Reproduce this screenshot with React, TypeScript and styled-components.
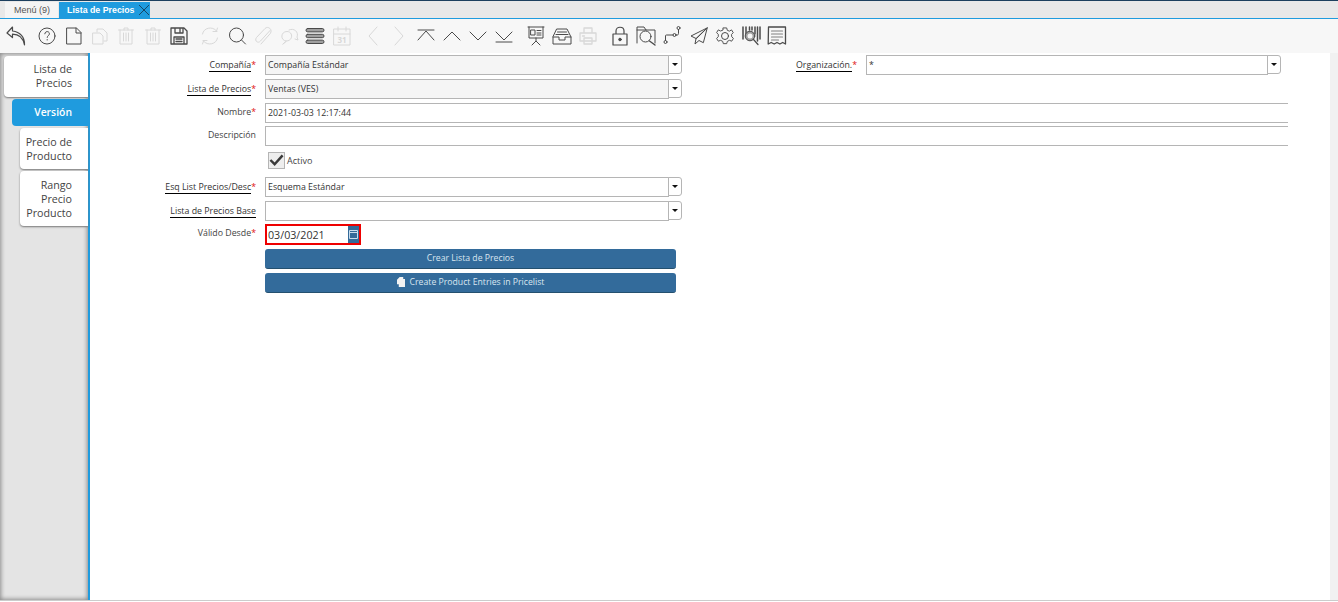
import React from "react";
import styled, { createGlobalStyle } from "styled-components";

const GlobalStyle = createGlobalStyle`
  html, body {
    margin: 0;
    padding: 0;
    height: 100%;
    background: #ffffff;
    overflow: hidden;
  }
  #root {
    height: 100%;
  }
`;

const FONT = `"Open Sans", "Liberation Sans", sans-serif`;

const Page = styled.div`
  display: flex;
  flex-direction: column;
  height: 601px;
  font-family: ${FONT};
  border-top: 1px solid #1c3f5e;
  box-sizing: border-box;
`;

const TabBar = styled.div`
  display: flex;
  align-items: flex-end;
  height: 17px;
  padding-left: 5px;
  background: #e8e8e8;
  border-bottom: 1px solid #1f9bde;
`;

const WindowTab = styled.div<{ $active?: boolean }>`
  display: flex;
  align-items: center;
  height: 16px;
  margin-right: 1px;
  padding: ${(p) => (p.$active ? "0 0 0 8px" : "0 8px 0 9px")};
  font-family: "Liberation Sans", sans-serif;
  font-size: ${(p) => (p.$active ? "8.8px" : "9px")};
  font-weight: ${(p) => (p.$active ? 700 : 400)};
  color: ${(p) => (p.$active ? "#ffffff" : "#555555")};
  background: ${(p) => (p.$active ? "#1f9bde" : "#f4f4f4")};
`;

const CloseIcon = styled.svg`
  width: 12px;
  height: 12px;
  margin-left: 3px;
  stroke: #174766;
  stroke-width: 1;
  fill: none;
`;

const Toolbar = styled.div`
  display: flex;
  align-items: center;
  height: 34px;
  padding-left: 3px;
  background: #f7f7f7;
`;

const Tool = styled.div<{ $off?: boolean; $gap?: boolean }>`
  display: flex;
  align-items: center;
  justify-content: center;
  width: 26.3px;
  height: 26px;
  margin-left: ${(p) => (p.$gap ? "5px" : "0")};
  color: ${(p) => (p.$off ? "#d8d8d8" : "#4a4a4a")};

  svg {
    flex: none;
    width: 24px;
    height: 24px;
    fill: none;
    stroke: currentColor;
    stroke-width: 1;
    stroke-linecap: round;
    stroke-linejoin: round;
  }
`;

const Body = styled.div`
  flex: 1;
  display: flex;
  min-height: 0;
  border-bottom: 1px solid #cccccc;
`;

const Sidebar = styled.div`
  display: flex;
  flex-direction: column;
  align-items: flex-end;
  gap: 2px;
  width: 88px;
  padding-top: 3px;
  background: #e4e4e4;
  box-shadow: inset 0 0 4px 1px #8a8a8a;
  border-right: 2px solid #1f9bde;
`;

const SideTab = styled.div<{ $level: number; $active?: boolean }>`
  box-sizing: border-box;
  width: ${(p) => 84 - p.$level * 8}px;
  padding: ${(p) => (p.$level === 2 ? "7px 16px 6px 4px" : "6px 16px 7px 4px")};
  border-radius: 4px 0 0 4px;
  font-size: ${(p) => (p.$active ? "10.4px" : "10.7px")};
  line-height: 14px;
  text-align: right;
  font-weight: ${(p) => (p.$active ? 600 : 400)};
  color: ${(p) => (p.$active ? "#ffffff" : "#444444")};
  background: ${(p) => (p.$active ? "#1f9bde" : "#ffffff")};
  box-shadow: ${(p) => (p.$active ? "none" : "0 1px 2px #777777")};
`;

const Content = styled.div`
  flex: 1;
  display: flex;
  flex-direction: column;
  padding-top: 2px;
  background: #ffffff;
`;

const Scroll = styled.div`
  width: 8px;
  background: #f1f1f1;
`;

const Row = styled.div<{ $top?: number }>`
  display: flex;
  align-items: center;
  height: 20px;
  margin-top: ${(p) => p.$top ?? 4}px;
`;

const Label = styled.div<{ $width?: number; $lift?: number }>`
  box-sizing: border-box;
  flex: none;
  width: ${(p) => p.$width ?? 175}px;
  padding-right: 9px;
  margin-top: ${(p) => -(p.$lift ?? 3)}px;
  text-align: right;
  font-size: 8.8px;
  color: #444444;
  white-space: nowrap;
`;

const LinkText = styled.span`
  color: #333333;
  border-bottom: 1px solid #000000;
`;

const Required = styled.span`
  color: #e01010;
`;

const Field = styled.div<{ $width: number; $readOnly?: boolean }>`
  box-sizing: border-box;
  flex: none;
  display: flex;
  align-items: center;
  width: ${(p) => p.$width}px;
  height: 20px;
  padding-left: 2px;
  padding-bottom: ${(p) => (p.$readOnly ? "1px" : "0")};
  border: 1px solid #b5b5b5;
  border-right: ${(p) => (p.$width > 800 ? "none" : "1px solid #b5b5b5")};
  font-size: 8.8px;
  color: #333333;
  background: ${(p) => (p.$readOnly ? "#f5f5f5" : "#ffffff")};
  white-space: nowrap;
`;

const ComboWrap = styled.div`
  display: flex;
  align-items: flex-start;
`;

const ComboButton = styled.div`
  box-sizing: border-box;
  flex: none;
  display: flex;
  align-items: center;
  justify-content: center;
  width: 14px;
  height: 19px;
  margin-left: -1px;
  background: #ffffff;
  border: 1px solid #b5b5b5;
  border-radius: 0 3px 3px 0;
`;

const Caret = styled.span`
  width: 0;
  height: 0;
  border-left: 3px solid transparent;
  border-right: 3px solid transparent;
  border-top: 3px solid #111111;
`;

const CheckBox = styled.div`
  box-sizing: border-box;
  display: flex;
  align-items: center;
  justify-content: center;
  width: 17px;
  height: 17px;
  background: #eeeeee;
  border: 1px solid #b5b5b5;

  svg {
    width: 16px;
    height: 14px;
    fill: none;
    stroke: #3a3a3a;
    stroke-width: 2.6;
  }
`;

const CheckLabel = styled.span`
  margin-left: 2px;
  font-size: 9px;
  color: #444444;
`;

const DateBox = styled.div`
  box-sizing: border-box;
  display: flex;
  justify-content: space-between;
  align-items: stretch;
  width: 96px;
  height: 21px;
  border: 2px solid #ee0000;
  font-size: 10.7px;
  line-height: 18px;
  color: #333333;
  padding-left: 1px;
`;

const DateButton = styled.div`
  display: flex;
  align-items: center;
  justify-content: center;
  width: 11px;
  background: #336a99;

  svg {
    width: 9px;
    height: 10px;
    fill: none;
    stroke: #c9dcec;
    stroke-width: 1;
  }
`;

const ActionButton = styled.div`
  box-sizing: border-box;
  display: flex;
  align-items: center;
  justify-content: center;
  gap: 5px;
  width: 411px;
  height: 20px;
  padding-bottom: 1px;
  border-radius: 3px;
  background: #336b9b;
  border-bottom: 1px solid #24506f;
  font-size: 8.7px;
  color: #d9e6f0;

  svg {
    width: 8px;
    height: 10px;
    fill: #f2f2f2;
  }
`;

const Spacer = styled.div<{ $width: number }>`
  flex: none;
  width: ${(p) => p.$width}px;
`;

const toolbarIcons: { off?: boolean; gap?: boolean; icon: React.ReactNode }[] = [
  { icon: <path strokeWidth="1.200" d="M8.500 3 3 9l5.500 4.500v-3.300c6 0 10.500 3.300 12 10.800C21 13 16 8 8.500 7z" /> },
  { gap: true, icon: <><circle cx="12" cy="12" r="8" /><path d="M9.800 9.800c0-3 4.600-3 4.600 0 0 1.800-2.200 1.800-2.200 3.600M12.200 15.500v.5" /></> },
  { icon: <path d="M5 4h9.500L19 8.500V20H5zM14 4v5h5" /> },
  { off: true, icon: <path d="M5 9h7l3 3v8H5zM9 8V5h6l4 4v8h-3" /> },
  { off: true, icon: <path d="M4.500 6h15M10 6V4h4v2M6 6v14h12V6M9.500 9v8M12 9v8M14.500 9v8" /> },
  { off: true, icon: <path d="M4.500 6h15M10 6V4h4v2M6 6v14h12V6M9.500 9v8M12 9v8M14.500 9v8" /> },
  { icon: <path strokeWidth="1.300" d="M4 4h13l3 3v13H4zM8 4v5h8V4M13 5v3M7 20v-7h10v7M9 15h6M9 17.500h6" /> },
  { gap: true, off: true, icon: <path d="M4.500 10c1-6.500 10-8 14-3l1-3M19.500 14c-1 6.500-10 8-14 3l-1 3M19 7.500h-4M5 16.500h4" /> },
  { icon: <><circle cx="11.500" cy="11" r="7" /><path d="M16.500 16l4 4" /></> },
  { off: true, icon: <path d="M19 6.500 9.500 17c-2.500 3-6.500-.3-4-3.500L14 4.500c3-3 8 1 5.300 5L10 20" /> },
  { off: true, icon: <path d="M9 17c-6-.5-5.500-9.500 1-9.500 6 0 6.500 9-.5 9.500l-3.500 3zM12 6c5-2.500 10 2 8 7l1 3-3-1" /> },
  { icon: <><rect x="3" y="4.500" width="18" height="3.400" rx="1.700" fill="#a0a0a0" /><rect x="3" y="10.300" width="18" height="3.400" rx="1.700" fill="#a0a0a0" /><rect x="3" y="16.100" width="18" height="3.400" rx="1.700" fill="#a0a0a0" /></> },
  { off: true, icon: <><path d="M4 5h16v16H4zM4 10h16M8 3v4M16 3v4" /><text x="12" y="19" fontSize="8" fontWeight="700" textAnchor="middle" fill="currentColor" stroke="none">31</text></> },
  { gap: true, off: true, icon: <path d="M16 3l-8 9 8 9" /> },
  { off: true, icon: <path d="m8 3 8 9-8 9" /> },
  { icon: <path d="M4 6h16M4 16l8-9 8 9" /> },
  { icon: <path d="m4 16 8-8 8 8" /> },
  { icon: <path d="m4 8 8 8 8-8" /> },
  { icon: <path d="m4 8 8 8 8-8M4 18h16" /> },
  { gap: true, icon: <path d="M4 3h16M5 3v11h14V3M12 14v3M8 21l4-4 4 4M7 6h4v5H7zM13 6.500h4M13 9h4M13 11h4" /> },
  { icon: <path d="M7 5h10l4 8v7H3v-7zM3 13h6v3h6v-3h6M7.500 8h9M6 10.500h12" /> },
  { off: true, icon: <path strokeWidth="1.300" d="M8 9V4h8v5M4 9h16v8H4zM8 14h8v6H8zM6.500 12h2" /> },
  { gap: true, icon: <><path strokeWidth="1.200" d="M5 10h14v11H5zM8 10V7c0-5 8-5 8 0v3" /><circle cx="12" cy="15.500" r="1.300" fill="currentColor" /></> },
  { icon: <><path d="M3 19V3h7l2 3h9v13M3 6h9" /><circle cx="11.500" cy="12.500" r="5.500" /><path strokeWidth="1.400" d="M15.500 17l5.500 4" /></> },
  { icon: <><circle cx="5.500" cy="18" r="1.500" /><circle cx="14.500" cy="11" r="1.500" /><circle cx="18.500" cy="4" r="1.500" /><path d="M5.500 16.500V12c0-1 .5-1 1-1H13M16 11h1c1 0 1.500-.5 1.500-1.500V5.500" /></> },
  { icon: <path d="M20 4 4 12l5 2.500zM20 4 9 14.500 8 20l4-3.500 4 2z" /> },
  { icon: <><circle cx="12" cy="12" r="3.500" /><g transform="translate(12 12) scale(.85) translate(-12 -12)"><path strokeWidth="1.100" d="M10 2.500h4l.7 2.800 2.500 1 2.500-1.500 2 3.300-2 2 .2 2.800 2 1.900-2 3.300-2.700-1-2.500 1.300-.7 2.600h-4l-.7-2.700-2.500-1.200-2.700 1-2-3.300 2-2v-2.700l-2-2 2-3.300 2.700 1.300 2.500-1z" /></g></> },
  { icon: <><path strokeWidth="1.500" d="M4 3v12M7 3v7M16 3v7M18.500 3v14M21 3v12M10.500 3v3M13 3v3" /><circle cx="11" cy="12" r="4.800" fill="#a0a0a0" /><circle cx="11" cy="12" r="2.500" fill="#f7f7f7" stroke="none" /><path strokeWidth="1.200" d="m14.500 15.500 4.500 5" /></> },
  { icon: <><path strokeWidth="1.300" d="M3.500 3h17v17l-2.800-1.500-2.800 1.500-2.900-1.500-2.800 1.500-3-1.500-3 1.500z" /><path stroke="#808080" strokeWidth="1.200" d="M6.500 7h11M6.500 10h11M6.500 13h11M6.500 16h7" /></> },
];

const Combo = ({ width, readOnly, children }: { width: number; readOnly?: boolean; children?: React.ReactNode }) => (
  <ComboWrap>
    <Field $width={width} $readOnly={readOnly}>{children}</Field>
    <ComboButton><Caret /></ComboButton>
  </ComboWrap>
);

export default function App() {
  return (
    <Page>
      <GlobalStyle />
      <TabBar>
        <WindowTab>Menú (9)</WindowTab>
        <WindowTab $active>
          Lista de Precios
          <CloseIcon viewBox="0 0 12 12"><path d="M1 1l10 10M11 1 1 11" /></CloseIcon>
        </WindowTab>
      </TabBar>
      <Toolbar>
        {toolbarIcons.map((item, index) => (
          <Tool key={index} $off={item.off} $gap={item.gap}>
            <svg viewBox="0 0 24 24">{item.icon}</svg>
          </Tool>
        ))}
      </Toolbar>
      <Body>
        <Sidebar>
          <SideTab $level={0}>Lista de Precios</SideTab>
          <SideTab $level={1} $active>Versión</SideTab>
          <SideTab $level={2}>Precio de Producto</SideTab>
          <SideTab $level={2}>Rango Precio Producto</SideTab>
        </Sidebar>
        <Content>
          <Row $top={0}>
            <Label $lift={1}><LinkText>Compañía</LinkText><Required>*</Required></Label>
            <Combo width={404} readOnly>Compañía Estándar</Combo>
            <Label $width={184} $lift={1}><LinkText>Organización.</LinkText><Required>*</Required></Label>
            <Combo width={402}>*</Combo>
          </Row>
          <Row>
            <Label $lift={1}><LinkText>Lista de Precios</LinkText><Required>*</Required></Label>
            <Combo width={404} readOnly>Ventas (VES)</Combo>
          </Row>
          <Row>
            <Label>Nombre<Required>*</Required></Label>
            <Field $width={1023}>2021-03-03 12:17:44</Field>
          </Row>
          <Row $top={3}>
            <Label>Descripción</Label>
            <Field $width={1023} />
          </Row>
          <Row>
            <Spacer $width={178} />
            <CheckBox>
              <svg viewBox="0 0 16 14"><path d="m1.500 7 4.500 4.500L14.500 2" /></svg>
            </CheckBox>
            <CheckLabel>Activo</CheckLabel>
          </Row>
          <Row $top={7}>
            <Label $lift={1}><LinkText>Esq List Precios/Desc</LinkText><Required>*</Required></Label>
            <Combo width={404}>Esquema Estándar</Combo>
          </Row>
          <Row>
            <Label $lift={1}><LinkText>Lista de Precios Base</LinkText></Label>
            <Combo width={404} />
          </Row>
          <Row $top={3}>
            <Label>Válido Desde<Required>*</Required></Label>
            <DateBox>
              03/03/2021
              <DateButton>
                <svg viewBox="0 0 9 10"><path d="M.5 1.500h8v8h-8zM.5 3.500h8" /></svg>
              </DateButton>
            </DateBox>
          </Row>
          <Row $top={5}>
            <Spacer $width={175} />
            <ActionButton>Crear Lista de Precios</ActionButton>
          </Row>
          <Row>
            <Spacer $width={175} />
            <ActionButton>
              <svg viewBox="0 0 9 11"><path d="M3 0h4v2h2v9H2V8H0V3z" /></svg>
              Create Product Entries in Pricelist
            </ActionButton>
          </Row>
        </Content>
        <Scroll />
      </Body>
    </Page>
  );
}
